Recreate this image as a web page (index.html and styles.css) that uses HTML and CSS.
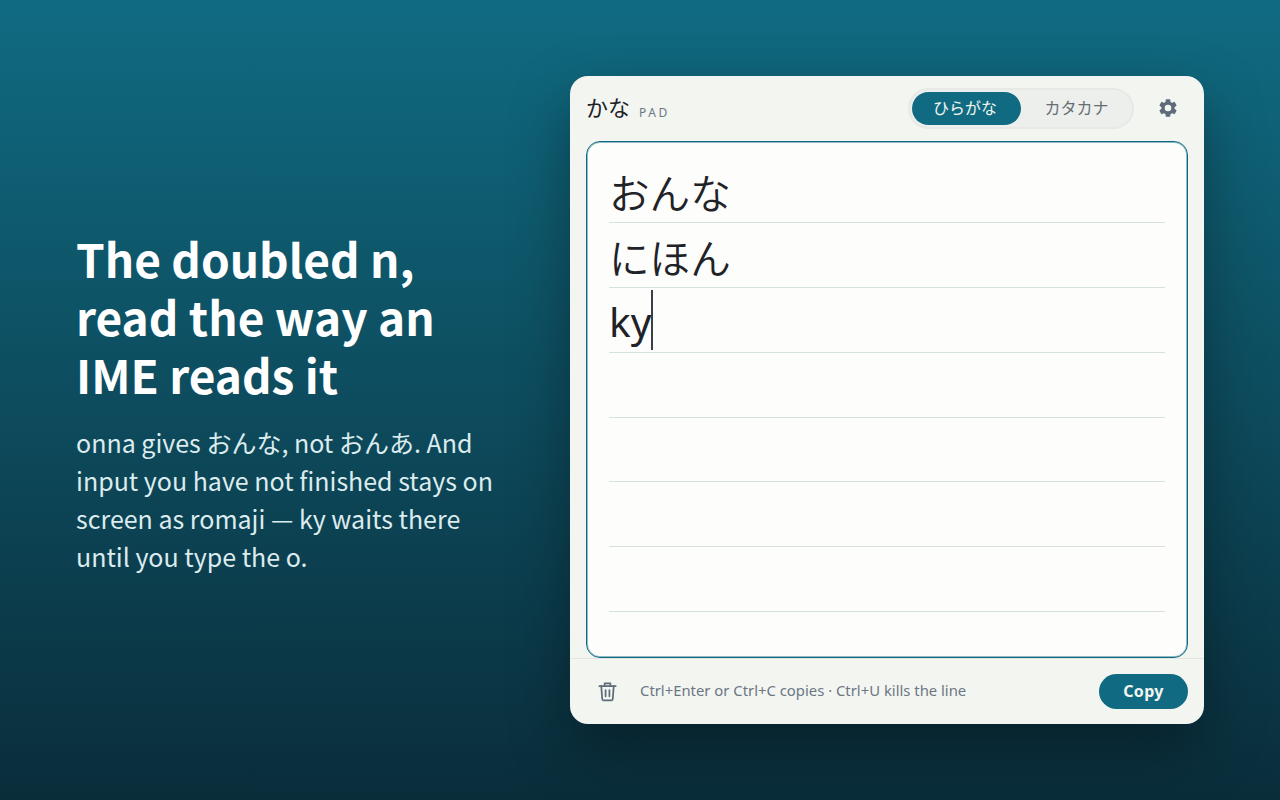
FILE: index.html
```html
<!DOCTYPE html>
<html lang="en">
<head>
<meta charset="UTF-8" />
<title>kana pad</title>
<link rel="stylesheet" href="styles.css">
</head>
<body>
<section class="pitch">
  <h1>The doubled n,<br>read the way an<br>IME reads it</h1>
  <p>onna gives おんな, not おんあ. And input you have not finished stays on screen as romaji — ky waits there until you type the o.</p>
</section>
<main class="pad">
  <header class="pad-head">
    <div class="brand">かな <span class="brand-sub">PAD</span></div>
    <div class="mode" role="group">
      <button class="mode-btn active">ひらがな</button>
      <button class="mode-btn">カタカナ</button>
    </div>
    <button class="icon-btn settings" aria-label="Settings">
      <svg viewBox="0 0 24 24" width="22" height="22"><path fill="currentColor" fill-rule="evenodd" d="M19.14 12.94c.04-.3.06-.61.06-.94s-.02-.64-.07-.94l2.03-1.58a.5.5 0 0 0 .12-.61l-1.92-3.32a.5.5 0 0 0-.59-.22l-2.39.96a7 7 0 0 0-1.62-.94l-.36-2.54a.48.48 0 0 0-.48-.41h-3.84a.48.48 0 0 0-.47.41l-.36 2.54c-.59.24-1.13.57-1.62.94l-2.39-.96a.49.49 0 0 0-.59.22L2.74 8.87a.48.48 0 0 0 .12.61l2.03 1.58c-.05.3-.09.63-.09.94s.02.64.07.94l-2.03 1.58a.5.5 0 0 0-.12.61l1.92 3.32c.12.22.37.29.59.22l2.39-.96c.5.38 1.03.7 1.62.94l.36 2.54c.05.24.24.41.48.41h3.84c.24 0 .44-.17.47-.41l.36-2.54a7 7 0 0 0 1.62-.94l2.39.96c.22.08.47 0 .59-.22l1.92-3.32a.48.48 0 0 0-.12-.61l-2.01-1.58zM12 15.6a3.6 3.6 0 1 1 0-7.2 3.6 3.6 0 0 1 0 7.2z"/></svg>
    </button>
  </header>
  <div class="sheet">
    <div class="line kana">おんな</div>
    <div class="line kana">にほん</div>
    <div class="line"><span class="caret">ky</span></div>
    <div class="line"></div>
    <div class="line"></div>
    <div class="line"></div>
    <div class="line"></div>
  </div>
  <footer class="pad-foot">
    <button class="icon-btn trash" aria-label="Clear">
      <svg viewBox="0 0 24 24" width="23" height="23" fill="none" stroke="currentColor" stroke-width="1.8" stroke-linecap="round" stroke-linejoin="round"><path d="M3.5 6.5h17"/><path d="M9 6.500V3.500h6v3"/><path d="M5.500 6.500l1 13.500a1.500 1.500 0 0 0 1.500 1.200h8a1.500 1.500 0 0 0 1.500-1.200l1-13.500"/><path d="M10 10.500v6.500"/><path d="M14 10.500v6.500"/></svg>
    </button>
    <span class="hint">Ctrl+Enter or Ctrl+C copies · Ctrl+U kills the line</span>
    <button class="copy">Copy</button>
  </footer>
</main>
</body>
</html>
```

FILE: styles.css
```css
* {
  box-sizing: border-box;
}
body {
  margin: 0;
  width: 1280px;
  height: 800px;
  overflow: hidden;
  display: flex;
  align-items: center;
  justify-content: space-between;
  padding: 0 76px;
  background: linear-gradient(180deg, #106b82 0%, #0a2d3a 100%);
  font-family: "Noto Sans", "Noto Sans CJK JP", sans-serif;
}
button {
  font-family: inherit;
  border: none;
  background: none;
  padding: 0;
}

.pitch {
  width: 420px;
  color: #fff;
  font-family: "Noto Sans CJK JP", sans-serif;
  margin-top: 3px;
}
.pitch h1 {
  margin: 0 0 20px 0;
  font-size: 46px;
  line-height: 58px;
  font-weight: 700;
}
.pitch p {
  margin: 0;
  font-size: 25px;
  line-height: 38px;
  font-weight: 400;
  color: #dcebee;
}

.pad {
  width: 634px;
  height: 648px;
  display: flex;
  flex-direction: column;
  background: #f3f5f1;
  border-radius: 18px;
  box-shadow: 0 24px 60px rgba(0, 0, 0, 0.35);
}
.pad-head {
  height: 65px;
  display: flex;
  align-items: center;
  padding: 0 25px 0 16px;
}
.brand {
  font-size: 22px;
  color: #1f2328;
  font-family: "Noto Sans CJK JP", sans-serif;
  margin: 0 auto 6px 0;
}
.brand-sub {
  font-family: "Noto Sans", sans-serif;
  font-size: 12px;
  letter-spacing: 2.6px;
  color: #6b7783;
  margin-left: 4px;
  vertical-align: -1px;
}
.mode {
  display: flex;
  height: 41px;
  padding: 2px;
  background: #ecefeb;
  border: 2px solid #e6e9e5;
  border-radius: 21px;
  margin-right: 23px;
}
.mode-btn {
  width: 109px;
  padding: 0 0 3px 2px;
  font-family: "Noto Sans CJK JP", sans-serif;
  font-size: 16px;
  color: #666d74;
  border-radius: 17px;
}
.mode-btn.active {
  padding: 0 3px 3px 0;
  background: #106b82;
  color: #f3f5f1;
}
.icon-btn {
  display: flex;
  color: #5f6b78;
}
.settings {
  margin-bottom: 2px;
}

.sheet {
  height: 517px;
  margin: 0 16px;
  padding: 16px 22px 0 22px;
  background: #fdfdfb;
  border: 1px solid #106b82;
  border-radius: 14px;
  box-shadow: inset 0 0 0 1px rgba(16, 107, 130, 0.45);
}
.line {
  height: 64.9px;
  border-bottom: 1px solid #d6e0dd;
  font-family: "Noto Sans CJK JP", sans-serif;
  font-size: 40.6px;
  line-height: 64px;
  color: #1f2328;
}
.line.kana {
  line-height: 67px;
  font-weight: 350;
}
.caret {
  font-family: "Noto Sans", sans-serif;
  display: inline-block;
  height: 60px;
  border-right: 2px solid #3a4046;
}

.pad-foot {
  flex: 1;
  display: flex;
  align-items: center;
  padding: 0 16px 0 26px;
  border-top: 1px solid #e2e5e1;
}
.hint {
  margin: 0 auto 3px 21px;
  font-size: 14.85px;
  color: #6b7783;
}
.copy {
  width: 89px;
  height: 35px;
  padding-bottom: 1px;
  border-radius: 18px;
  background: #106b82;
  color: #f3f5f1;
  font-size: 16px;
  font-weight: 700;
  letter-spacing: 0.3px;
}
```
